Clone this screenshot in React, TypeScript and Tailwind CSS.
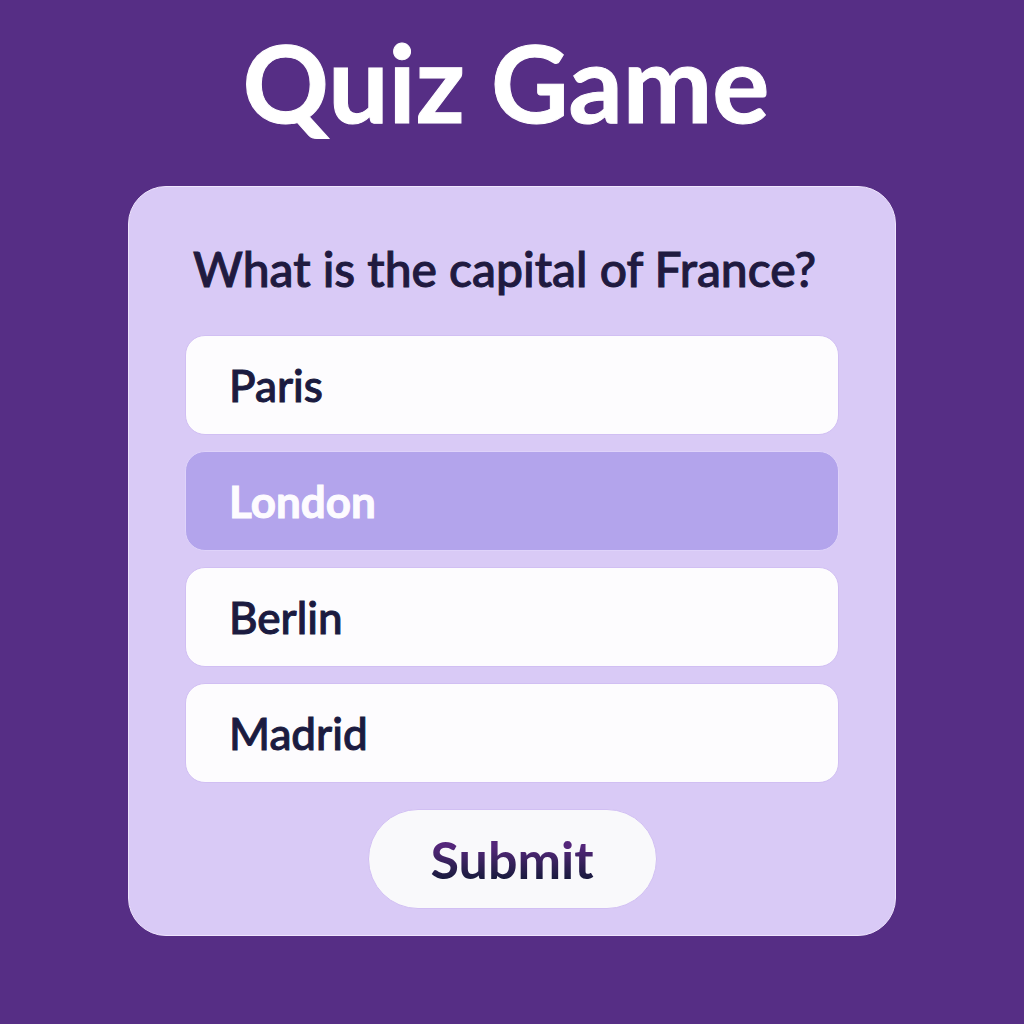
import { useState } from "react";

const answers = ["Paris", "London", "Berlin", "Madrid"];

export default function App() {
  const [selected, setSelected] = useState("London");

  return (
    <main className="flex min-h-screen flex-col items-center bg-[#562e85] px-8 pt-[22px] pb-[86px] font-['Lato',sans-serif]">
      <h1 className="pr-3 text-center text-[107px] leading-[120px] font-bold text-white [-webkit-text-stroke:1px_white]">
        Quiz Game
      </h1>
      <form
        onSubmit={(event) => event.preventDefault()}
        className="mt-11 flex w-full max-w-3xl flex-col items-center rounded-[38px] border border-[#eee4fd] bg-[#d9caf6] px-14 pt-[52px] pb-[26px]"
      >
        <fieldset className="w-full">
          <legend className="w-full px-2 text-[48px] leading-[60px] font-medium text-[#201a40] [-webkit-text-stroke:1px_#201a40]">
            What is the capital of France?
          </legend>
          <div className="mt-9 flex flex-col gap-4">
            {answers.map((answer) => (
              <label
                key={answer}
                className="flex h-[100px] cursor-pointer items-center rounded-[20px] border border-[#d1bff3] bg-[#fdfcfe] px-[43px] text-[44px] font-medium text-[#1b1b40] [-webkit-text-stroke:1px] has-checked:border-[#dfd3fa] has-checked:bg-[#b3a4ec] has-checked:font-bold has-checked:text-[#fdfbff] has-focus-visible:outline-2 has-focus-visible:outline-[#562e85]"
              >
                <input
                  type="radio"
                  name="answer"
                  value={answer}
                  checked={selected === answer}
                  onChange={() => setSelected(answer)}
                  className="sr-only"
                />
                {answer}
              </label>
            ))}
          </div>
        </fieldset>
        <button
          type="submit"
          className="mt-[26px] h-[100px] rounded-full border border-[#d1bff3] bg-[#f9f9fb] px-[62px] text-[52px]"
        >
          <span className="bg-linear-to-b from-[#54267a] from-30% to-[#1b1b40] to-80% bg-clip-text font-bold text-transparent">
            Submit
          </span>
        </button>
      </form>
    </main>
  );
}
